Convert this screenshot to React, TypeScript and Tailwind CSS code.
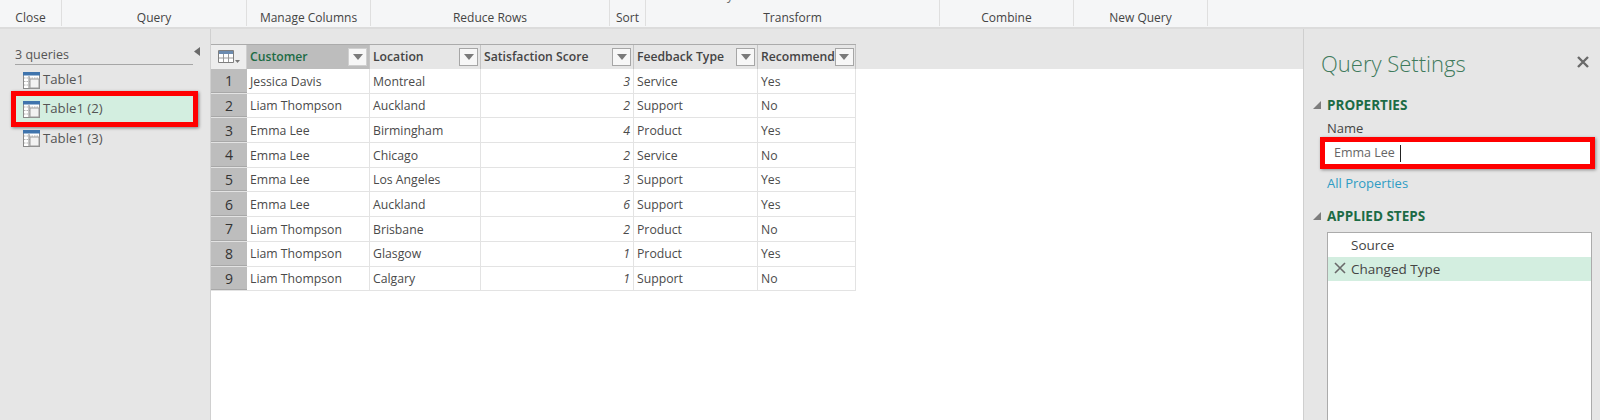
const font = { fontFamily: '"Open Sans", "Noto Sans", sans-serif' }

const ribbon = [
  { label: "Close", w: "w-[62px]" },
  { label: "Query", w: "w-[185px]" },
  { label: "Manage Columns", w: "w-[124px]" },
  { label: "Reduce Rows", w: "w-[239px]" },
  { label: "Sort", w: "w-[36px]" },
  { label: "Transform", w: "w-[294px]" },
  { label: "Combine", w: "w-[134px]" },
  { label: "New Query", w: "w-[134px]" },
]

const columns = ["Customer", "Location", "Satisfaction Score", "Feedback Type", "Recommend"]

const rows = [
  ["Jessica Davis", "Montreal", "3", "Service", "Yes"],
  ["Liam Thompson", "Auckland", "2", "Support", "No"],
  ["Emma Lee", "Birmingham", "4", "Product", "Yes"],
  ["Emma Lee", "Chicago", "2", "Service", "No"],
  ["Emma Lee", "Los Angeles", "3", "Support", "Yes"],
  ["Emma Lee", "Auckland", "6", "Support", "Yes"],
  ["Liam Thompson", "Brisbane", "2", "Product", "No"],
  ["Liam Thompson", "Glasgow", "1", "Product", "Yes"],
  ["Liam Thompson", "Calgary", "1", "Support", "No"],
]

function TableIcon() {
  return (
    <svg width="17" height="17" viewBox="0 0 17 17" className="shrink-0">
      <rect x="0.5" y="0.5" width="16" height="16" fill="#fff" stroke="#8a8a8a" />
      <rect x="0" y="0" width="17" height="3.5" fill="#3f74ad" />
      <path d="M1 6h15M1 9.5h15M1 13h15" stroke="#b5b5b5" strokeDasharray="1.5 1" />
      <path d="M6 4v12" stroke="#8a8a8a" />
      <rect x="7" y="7" width="9" height="9" fill="#f2f2f2" stroke="#9a9a9a" />
    </svg>
  )
}

function FilterButton({ dark }: { dark?: boolean }) {
  return (
    <div
      className={`flex h-[18px] w-[19px] shrink-0 items-center justify-center border bg-[#f7f7f7] ${
        dark ? "border-[#d0d0d0]" : "border-[#a6a6a6]"
      }`}
    >
      <svg width="10" height="6" viewBox="0 0 10 6">
        <path d="M0 0h10L5 6z" fill="#7a7a7a" />
      </svg>
    </div>
  )
}

function Triangle() {
  return (
    <svg width="8" height="8" viewBox="0 0 8 8" className="shrink-0">
      <path d="M8 0v8H0z" fill="#7d7d7d" />
    </svg>
  )
}

export default function App() {
  return (
    <div
      className="flex h-[420px] w-[1600px] flex-col overflow-hidden bg-white text-[#444]"
      style={font}
    >
      {/* ribbon group names */}
      <div className="relative flex h-[29px] shrink-0 border-b-2 border-[#dcdcdc] bg-[#f5f6f7]">
        {ribbon.map((r) => (
          <div key={r.label} className={`${r.w} h-[26px] border-r border-[#dfdfdf] pt-[9px] text-center text-[12px] leading-[18px] text-[#444]`}>
            {r.label}
          </div>
        ))}
        <span className="absolute left-[727px] top-[-13px] text-[12px] leading-[18px] text-[#666]">y</span>
      </div>

      <div className="flex min-h-0 flex-1">
        {/* queries pane */}
        <aside className="w-[211px] shrink-0 border-r border-[#d0d0d0] bg-[#e6e6e6] pt-[18px]">
          <div className="relative mx-[15px] flex h-[18px] w-[178px] items-center border-b border-[#a6a6a6] pb-[1px] text-[12.5px] text-[#555]">
            3 queries
            <svg width="6" height="9" viewBox="0 0 6 9" className="absolute right-[-7px] top-[0px]">
              <path d="M6 0v9L0 4.5z" fill="#6a6a6a" />
            </svg>
          </div>
          <div className="flex h-[26px] items-center gap-[3px] pl-[23px] pt-[4px] text-[13.2px] text-[#555]">
            <TableIcon />
            Table1
          </div>
          <div className="ml-[11px] flex h-[36px] w-[187px] items-center gap-[3px] border-[5px] border-[#ff0000] bg-[#d3eee0] pl-[7px] text-[13.2px] text-[#555] shadow-[1px_1px_3px_rgba(0,0,0,0.45)]">
            <TableIcon />
            Table1 (2)
          </div>
          <div className="flex h-[22px] items-center gap-[3px] pl-[23px] pt-[1px] text-[13.2px] text-[#555]">
            <TableIcon />
            Table1 (3)
          </div>
        </aside>

        {/* data grid */}
        <main className="min-w-0 flex-1">
          <div className="h-[40px] bg-[#e6e6e6] pt-[15px]">
            <div className="grid h-[25px] w-[645px] grid-cols-[36px_123px_111px_153px_124px_98px] border-t border-[#ababab] text-[12.2px] font-semibold text-[#444]">
              <div className="flex items-center justify-center gap-[1px] border-r border-[#cfcfcf] bg-[#ededed]">
                <svg width="22" height="14" viewBox="0 0 22 14">
                  <path d="M.5 .5h15v12H.5z" fill="#fff" stroke="#7f7f7f" />
                  <path d="M1 1h14v3H1z" fill="#6d8cb0" />
                  <path d="M1 8h14M5.5 4v8M10.5 4v8" stroke="#9a9a9a" />
                  <path d="M17 10h5l-2.5 3z" fill="#777" />
                </svg>
              </div>
              {columns.map((c, i) => (
                <div
                  key={c}
                  className={`flex items-center justify-between border-r border-[#c4c4c4] pl-[3px] pr-[2px] ${
                    i === 0 ? "bg-[#bdbdbd] text-[#1c6b45]" : "bg-[#e6e6e6]"
                  }`}
                >
                  <span className="whitespace-nowrap">{c}</span>
                  <FilterButton dark={i === 0} />
                </div>
              ))}
            </div>
          </div>
          <div className="w-[645px] text-[12.25px] text-[#4a4a4a]">
            {rows.map((row, n) => (
              <div
                key={n}
                className="grid h-[24.7px] grid-cols-[36px_123px_111px_153px_124px_98px] border-b border-[#e3e3e3]"
              >
                <div className="flex items-center justify-center border-b border-[#a8a8a8] bg-[#bdbdbd] pt-[1px] text-[14px] text-[#333]">
                  {n + 1}
                </div>
                {row.map((cell, i) => (
                  <div
                    key={i}
                    className={`flex items-center whitespace-nowrap border-r border-[#e3e3e3] px-[3px] pt-[2px] ${
                      i === 2 ? "justify-end italic" : ""
                    }`}
                  >
                    {cell}
                  </div>
                ))}
              </div>
            ))}
          </div>
        </main>

        {/* query settings */}
        <aside className="flex w-[297px] shrink-0 flex-col border-l border-[#cfcfcf] bg-[#e6e6e6]">
          <div className="flex h-[50px] items-end justify-between pl-[17px] pr-[12px]">
            <span className="text-[22px] font-light leading-[32px] text-[#3f7a5c]">Query Settings</span>
            <svg width="12" height="12" viewBox="0 0 12 12" className="mb-[11px] mr-[-1px]">
              <path d="M1 1l10 10M11 1L1 11" stroke="#6a6a6a" strokeWidth="2.4" />
            </svg>
          </div>
          <div className="mt-[17px] flex h-[18px] items-center gap-[6px] pl-[9px] text-[13.5px] font-bold text-[#1c6b45]">
            <Triangle />
            PROPERTIES
          </div>
          <div className="mt-[5px] h-[18px] pl-[23px] text-[13px] leading-[18px] text-[#444]">Name</div>
          <div className="ml-[16px] flex h-[32px] w-[275px] items-center border-[5px] border-[#ff0000] bg-white pl-[9px] text-[12.5px] text-[#666] shadow-[1px_1px_3px_rgba(0,0,0,0.4)]">
            Emma Lee
            <span className="ml-[5px] h-[17px] w-px bg-[#222]" />
          </div>
          <div className="mt-[4px] h-[20px] pl-[23px] text-[13px] leading-[20px] text-[#2e9cc4]">All Properties</div>
          <div className="mt-[14px] flex h-[18px] items-center gap-[6px] pl-[9px] text-[13.5px] font-bold text-[#1c6b45]">
            <Triangle />
            APPLIED STEPS
          </div>
          <div className="ml-[23px] mt-[7px] flex w-[265px] flex-1 flex-col border border-b-0 border-[#ababab] bg-white pt-[1px] text-[13.5px] text-[#444]">
            <div className="flex h-[23px] items-center pl-[23px]">Source</div>
            <div className="flex h-[24px] items-center gap-[5px] bg-[#d3eee0] pl-[6px]">
              <svg width="12" height="12" viewBox="0 0 12 12" className="mb-[2px] shrink-0">
                <path d="M1 1l10 10M11 1L1 11" stroke="#6a6a6a" strokeWidth="1.6" />
              </svg>
              Changed Type
            </div>
          </div>
        </aside>
      </div>
    </div>
  )
}
